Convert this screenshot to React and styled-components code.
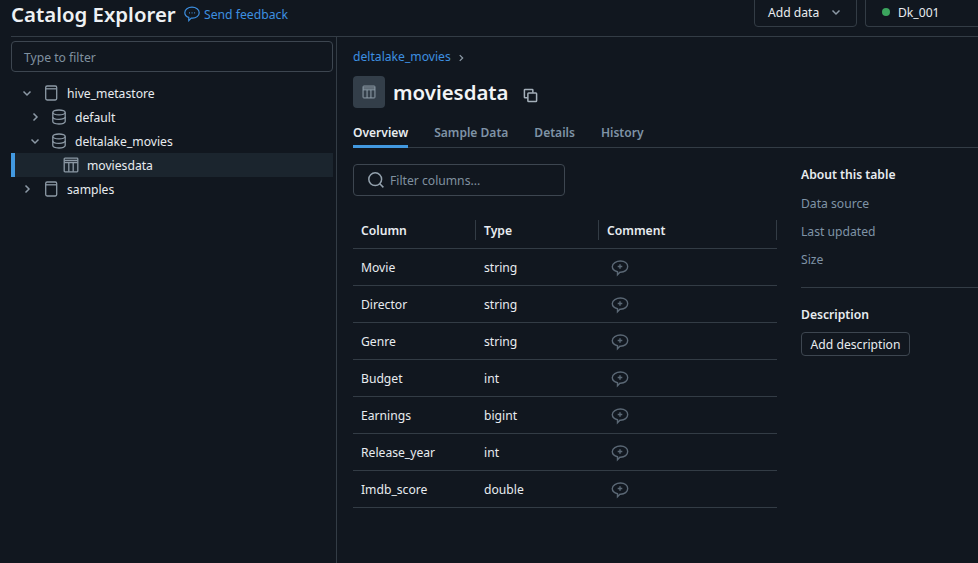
import React from "react";
import styled, { createGlobalStyle } from "styled-components";

const Global = createGlobalStyle`
  html, body { margin: 0; padding: 0; background: #11171f; overflow: hidden; }
  body { font-family: "Noto Sans", "Open Sans", sans-serif; font-size: 12.15px; color: #e8ecf0; }
  * { box-sizing: border-box; }
`;

const Page = styled.div`
  width: 978px;
  height: 563px;
  display: flex;
  flex-direction: column;
  overflow: hidden;
  background: #11171f;
`;

const TopBar = styled.header`
  height: 37px;
  margin-left: 11px;
  border-bottom: 1px solid #333c45;
  display: flex;
  align-items: flex-start;
  flex-shrink: 0;
`;

const PageTitle = styled.h1`
  margin: 0;
  font-size: 20.4px;
  line-height: 28px;
  font-weight: 600;
  color: #eef1f4;
  width: 173px;
  white-space: nowrap;
`;

const Feedback = styled.a`
  display: flex;
  align-items: center;
  gap: 4px;
  height: 28px;
  color: #3d8fe0;
  font-size: 12.2px;
`;

const TopActions = styled.div`
  margin-left: auto;
  display: flex;
  gap: 8px;
  margin-top: -5px;
`;

const TopButton = styled.div`
  height: 32px;
  border: 1px solid #333c45;
  border-radius: 4px;
  display: flex;
  align-items: center;
  color: #e8ecf0;
  padding-top: 2px;
  width: ${(p) => p.$w}px;
  padding-left: ${(p) => p.$pl}px;
  ${(p) => p.$open && "border-right: none; border-top-right-radius: 0; border-bottom-right-radius: 0;"}
`;

const Dot = styled.span`
  width: 8px;
  height: 8px;
  border-radius: 50%;
  background: #3ba55d;
  margin-right: 8px;
`;

const Body = styled.div`
  flex: 1;
  display: flex;
  min-height: 0;
`;

const Sidebar = styled.aside`
  width: 337px;
  border-right: 1px solid #333c45;
  padding: 4px 3px 0 11px;
  flex-shrink: 0;
`;

const TreeFilter = styled.div`
  height: 31px;
  border: 1px solid #3d4650;
  border-radius: 4px;
  display: flex;
  align-items: center;
  padding: 2px 0 0 12px;
  color: #80919f;
  margin-bottom: 9px;
`;

const TreeRow = styled.div`
  height: 24px;
  display: flex;
  align-items: center;
  padding-left: ${(p) => p.$indent}px;
  color: #e8ecf0;
  background: ${(p) => (p.$selected ? "#1b252e" : "transparent")};
  ${(p) => p.$selected && "border-left: 4px solid #4299e0;"}
`;

const Caret = styled.span`
  width: 12px;
  height: 12px;
  display: flex;
  color: #8c99a5;
  margin-left: ${(p) => p.$ml ?? 0}px;
  margin-right: ${(p) => p.$mr ?? 9}px;
`;

const NodeIcon = styled.span`
  width: 16px;
  height: 16px;
  display: flex;
  color: #8c99a5;
  margin-left: ${(p) => p.$ml ?? 0}px;
  margin-right: ${(p) => p.$mr}px;
`;

const Main = styled.main`
  flex: 1;
  min-width: 0;
  padding: 9px 0 0 16px;
`;

const Crumbs = styled.div`
  height: 20px;
  display: flex;
  align-items: center;
  gap: 5px;
  color: #3d8fe0;
`;

const CrumbSep = styled.span`
  display: flex;
  color: #8c99a5;
  margin-top: 3px;
`;

const TitleRow = styled.div`
  display: flex;
  align-items: center;
  height: 32px;
  margin-top: 10px;
`;

const TitleTile = styled.div`
  width: 32px;
  height: 32px;
  border-radius: 4px;
  background: #333e49;
  color: #94a2ae;
  display: flex;
  align-items: center;
  justify-content: center;
  margin-right: 8px;
`;

const TableName = styled.h2`
  margin: 0;
  font-size: 20.4px;
  font-weight: 600;
  line-height: 32px;
  color: #f2f4f6;
  width: 130px;
`;

const CopyBtn = styled.span`
  display: flex;
  color: #a4afb9;
  margin-top: 6px;
`;

const Tabs = styled.nav`
  display: flex;
  gap: 26px;
  height: 32px;
  margin-top: 8px;
  border-bottom: 1px solid #333c45;
`;

const Tab = styled.div`
  height: 32px;
  padding-top: 1px;
  line-height: 32px;
  font-size: 12.05px;
  font-weight: 600;
  color: ${(p) => (p.$active ? "#e8ecf0" : "#7f93a6")};
  ${(p) => p.$active && "border-bottom: 3px solid #4299e0;"}
`;

const Content = styled.div`
  display: flex;
  gap: 24px;
  margin-top: 16px;
`;

const TableCol = styled.section`
  width: 424px;
  flex-shrink: 0;
`;

const ColumnFilter = styled.div`
  width: 212px;
  height: 32px;
  border: 1px solid #3d4650;
  border-radius: 4px;
  display: flex;
  align-items: center;
  gap: 5px;
  padding-left: 13px;
  color: #80919f;
  margin-bottom: 16px;
`;

const Grid = styled.div`
  display: grid;
  grid-template-columns: 123px 123px 178px;
`;

const HeadCell = styled.div`
  height: 37px;
  display: flex;
  align-items: center;
  padding-left: 8px;
  font-weight: 600;
  color: #e8ecf0;
  border-bottom: 1px solid #333c45;
  position: relative;
  &::after {
    content: "";
    position: absolute;
    right: 0;
    top: 8px;
    height: 20px;
    width: 1px;
    background: #333c45;
  }
`;

const Cell = styled.div`
  height: 37px;
  display: flex;
  align-items: center;
  padding-left: 8px;
  color: #e8ecf0;
  border-bottom: 1px solid #333c45;
`;

const CommentIcon = styled.span`
  display: flex;
  color: #5b6875;
  margin-left: 4px;
  margin-top: 1px;
`;

const Side = styled.aside`
  flex: 1;
  min-width: 0;
  padding-top: 1px;
`;

const SideTitle = styled.div`
  font-weight: 600;
  color: #e8ecf0;
  line-height: 20px;
`;

const SideLabel = styled.div`
  color: #7f93a6;
  line-height: 18px;
  margin-top: 10px;
`;

const SideRule = styled.hr`
  border: none;
  border-top: 1px solid #333c45;
  margin: 18px 0 17px;
`;

const AddButton = styled.button`
  display: block;
  margin-top: 7px;
  height: 24px;
  width: 109px;
  padding: 0;
  background: transparent;
  border: 1px solid #3d4650;
  border-radius: 4px;
  color: #e8ecf0;
  font: inherit;
`;

const Chevron = ({ dir = "down", size = 12 }) => (
  <svg width={size} height={size} viewBox="0 0 12 12" fill="none" stroke="currentColor" strokeWidth="1.5">
    {dir === "down" ? <path d="M2.5 4.5 6 8l3.500-3.500" /> : <path d="M4.500 2.500 8 6l-3.500 3.500" />}
  </svg>
);

const Catalog = () => (
  <svg width="16" height="16" viewBox="0 0 16 16" fill="none" stroke="currentColor" strokeWidth="1.3">
    <rect x="1.700" y="1" width="11" height="14" rx="1.400" />
    <path d="M1.700 3.800h11" />
  </svg>
);

const Database = () => (
  <svg width="16" height="16" viewBox="0 0 16 16" fill="none" stroke="currentColor" strokeWidth="1.3">
    <ellipse cx="8" cy="3.400" rx="6.200" ry="2.400" />
    <path d="M1.800 3.400v9.200c0 1.400 2.800 2.400 6.200 2.400s6.200-1 6.200-2.400V3.400" />
    <path d="M1.800 8c0 1.400 2.800 2.400 6.200 2.400s6.200-1 6.200-2.400" />
  </svg>
);

const TableIcon = ({ size = 16, sw = 1.3 }) => (
  <svg width={size} height={size} viewBox="0 0 16 16" fill="none" stroke="currentColor" strokeWidth={sw}>
    <rect x="1.200" y="1.200" width="13.600" height="13.600" rx="0.800" />
    <path d="M1.200 5.500h13.600M5.800 5.500v9.300M10.200 5.500v9.300" />
    <path d="M1.200 3.400h13.600" />
  </svg>
);

const FeedbackIcon = () => (
  <svg width="16" height="16" viewBox="0 0 16 16" fill="none" stroke="currentColor" strokeWidth="1.200">
    <path d="M8 1.200c4 0 7.200 2.300 7.200 5.500S12 12.200 8.600 12.200c-.5 0-1 0-1.400-.1L4.800 14.600v-3.200C2.400 10.600.8 8.900.8 6.700.8 3.500 4 1.200 8 1.200Z" />
    <path d="M5 6.800h.9M7.600 6.800h.9M10.200 6.800h.9" />
  </svg>
);

const Search = () => (
  <svg width="18" height="18" viewBox="0 0 18 18" fill="none" stroke="#94a2ae" strokeWidth="1.500">
    <circle cx="8.200" cy="8.200" r="6.400" />
    <path d="m12.800 12.800 3.600 3.600" />
  </svg>
);

const Copy = () => (
  <svg width="15" height="15" viewBox="0 0 16 16" fill="none" stroke="currentColor" strokeWidth="1.600">
    <path d="M5 10.500H2.200a.7.7 0 0 1-.7-.7V2.200a.7.7 0 0 1 .7-.7h7.600a.7.7 0 0 1 .7.700V5" />
    <rect x="5.200" y="5.200" width="9.300" height="9.300" rx="0.800" />
  </svg>
);

const CommentPlus = () => (
  <svg width="18" height="18" viewBox="0 0 18 18" fill="none" stroke="currentColor" strokeWidth="1.400">
    <path d="M9.500 2c4.100 0 7.200 2.300 7.200 5.600s-3.100 5.600-7.200 5.600h-.6l-2.400 2.600v-3C3.400 12 1.300 10.100 1.300 7.600 1.300 4.300 5.400 2 9.500 2Z" />
    <path d="M9 5.200v4.600M6.700 7.500h4.600" />
  </svg>
);

const columns = [
  ["Movie", "string"],
  ["Director", "string"],
  ["Genre", "string"],
  ["Budget", "int"],
  ["Earnings", "bigint"],
  ["Release_year", "int"],
  ["Imdb_score", "double"],
];

export default function App() {
  return (
    <Page>
      <Global />
      <TopBar>
        <PageTitle>Catalog Explorer</PageTitle>
        <Feedback><FeedbackIcon />Send feedback</Feedback>
        <TopActions>
          <TopButton $w={103} $pl={13}>
            Add data
            <Caret $ml={11} $mr={0}><Chevron /></Caret>
          </TopButton>
          <TopButton $w={113} $pl={16} $open><Dot />Dk_001</TopButton>
        </TopActions>
      </TopBar>
      <Body>
        <Sidebar>
          <TreeFilter>Type to filter</TreeFilter>
          <TreeRow $indent={10}>
            <Caret><Chevron /></Caret>
            <NodeIcon $ml={2} $mr={7}><Catalog /></NodeIcon>hive_metastore
          </TreeRow>
          <TreeRow $indent={18}>
            <Caret><Chevron dir="right" /></Caret>
            <NodeIcon $ml={1} $mr={8}><Database /></NodeIcon>default
          </TreeRow>
          <TreeRow $indent={18}>
            <Caret><Chevron /></Caret>
            <NodeIcon $ml={1} $mr={8}><Database /></NodeIcon>deltalake_movies
          </TreeRow>
          <TreeRow $indent={48} $selected>
            <NodeIcon $mr={8}><TableIcon /></NodeIcon>moviesdata
          </TreeRow>
          <TreeRow $indent={10}>
            <Caret><Chevron dir="right" /></Caret>
            <NodeIcon $ml={2} $mr={7}><Catalog /></NodeIcon>samples
          </TreeRow>
        </Sidebar>
        <Main>
          <Crumbs>
            deltalake_movies
            <CrumbSep><Chevron dir="right" size={10} /></CrumbSep>
          </Crumbs>
          <TitleRow>
            <TitleTile><TableIcon size={14} sw={1.1} /></TitleTile>
            <TableName>moviesdata</TableName>
            <CopyBtn><Copy /></CopyBtn>
          </TitleRow>
          <Tabs>
            <Tab $active>Overview</Tab>
            <Tab>Sample Data</Tab>
            <Tab>Details</Tab>
            <Tab>History</Tab>
          </Tabs>
          <Content>
            <TableCol>
              <ColumnFilter><Search />Filter columns...</ColumnFilter>
              <Grid>
                <HeadCell>Column</HeadCell>
                <HeadCell>Type</HeadCell>
                <HeadCell>Comment</HeadCell>
                {columns.map(([name, type]) => (
                  <React.Fragment key={name}>
                    <Cell>{name}</Cell>
                    <Cell>{type}</Cell>
                    <Cell><CommentIcon><CommentPlus /></CommentIcon></Cell>
                  </React.Fragment>
                ))}
              </Grid>
            </TableCol>
            <Side>
              <SideTitle>About this table</SideTitle>
              <SideLabel>Data source</SideLabel>
              <SideLabel>Last updated</SideLabel>
              <SideLabel>Size</SideLabel>
              <SideRule />
              <SideTitle>Description</SideTitle>
              <AddButton>Add description</AddButton>
            </Side>
          </Content>
        </Main>
      </Body>
    </Page>
  );
}
